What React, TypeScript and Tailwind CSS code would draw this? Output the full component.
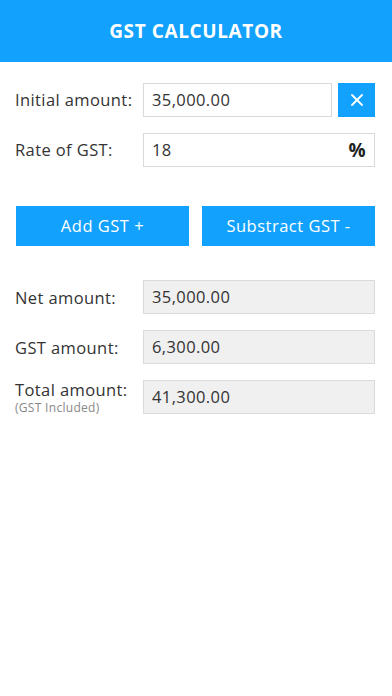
import { X } from 'lucide-react'

const results = [
  { label: 'Net amount:', value: '35,000.00' },
  { label: 'GST amount:', value: '6,300.00' },
  { label: 'Total amount:', value: '41,300.00', note: '(GST Included)' },
]

export default function App() {
  return (
    <div className="min-h-[696px] bg-white font-['Open_Sans',sans-serif] text-[#333]">
      {/* Header */}
      <div className="flex h-[62px] items-center justify-center bg-[#12a1fd]">
        <h1 className="text-[19px] font-bold tracking-[0.6px] text-white">GST CALCULATOR</h1>
      </div>

      {/* Inputs */}
      <div className="flex flex-col gap-4 pl-[15px] pr-[17px] pt-[21px] text-[16.5px] tracking-[0.4px]">
        <div className="flex items-center">
          <span className="w-[128px] shrink-0">Initial amount:</span>
          <div className="flex h-[34px] flex-1 items-center border border-[#dadada] px-2">35,000.00</div>
          <button className="ml-1.5 flex h-[34px] w-[37px] items-center justify-center bg-[#12a1fd] text-white">
            <X size={20} strokeWidth={2.2} />
          </button>
        </div>
        <div className="flex items-center">
          <span className="w-[128px] shrink-0">Rate of GST:</span>
          <div className="flex h-[34px] flex-1 items-center justify-between border border-[#dadada] px-2">
            <span>18</span>
            <span className="text-[19px] font-bold text-[#222]">%</span>
          </div>
        </div>
      </div>

      {/* Actions */}
      <div className="mt-[39px] flex gap-[13px] pl-4 pr-[17px] text-[16.5px] tracking-[0.5px]">
        <button className="h-10 flex-1 bg-[#12a1fd] text-white">Add GST +</button>
        <button className="h-10 flex-1 bg-[#12a1fd] text-white">Substract GST -</button>
      </div>

      {/* Results */}
      <div className="mt-[34px] flex flex-col gap-4 pl-[15px] pr-[17px] text-[16.5px] tracking-[0.4px]">
        {results.map((r) => (
          <div key={r.label} className="flex items-center">
            <div className="flex w-[128px] shrink-0 flex-col">
              <span className="leading-[19px]">{r.label}</span>
              {r.note && (
                <span className="mt-[2px] text-[12px] leading-[13px] tracking-[0.3px] text-[#888]">{r.note}</span>
              )}
            </div>
            <div className="flex h-[34px] flex-1 items-center border border-[#dadada] bg-[#f0f0f0] px-2">
              {r.value}
            </div>
          </div>
        ))}
      </div>
    </div>
  )
}
